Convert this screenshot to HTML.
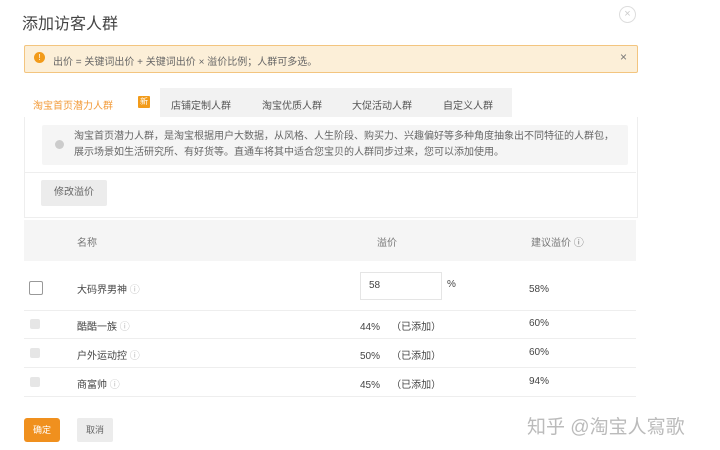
<!DOCTYPE html>
<html><head><meta charset="utf-8"><style>
body{margin:0;width:720px;height:450px;background:#fff;position:relative;overflow:hidden;font-family:"Liberation Sans","Noto Sans CJK SC",sans-serif;color:#555;font-size:10px}
.a{position:absolute;white-space:nowrap}
</style></head><body>
<div class="a" style="left:22px;top:10px;font-size:16px;color:#444">添加访客人群</div>
<div class="a" style="left:619px;top:6px;width:15px;height:15px;border:1.5px solid #ddd;border-radius:50%;color:#ccc;font-size:11px;text-align:center;line-height:15px">×</div>
<div class="a" style="left:24px;top:45px;width:612px;height:26px;background:#fcefd8;border:1px solid #f3c57f;border-radius:2px"></div>
<div class="a" style="left:34px;top:52px;width:11px;height:11px;border-radius:50%;background:#f29b1a;color:#fff;font-size:8px;text-align:center;line-height:11px">!</div>
<div class="a" style="left:53px;top:53px;color:#666">出价 = 关键词出价 + 关键词出价 × 溢价比例；人群可多选。</div>
<div class="a" style="left:620px;top:50px;font-size:12px;color:#777">×</div>
<div class="a" style="left:24px;top:88px;width:488px;height:29px;background:#f2f2f2"></div>
<div class="a" style="left:24px;top:88px;width:136px;height:30px;background:#fff"></div>
<div class="a" style="left:33px;top:97px;color:#f29b3a;font-size:10px">淘宝首页潜力人群</div>
<div class="a" style="left:138px;top:96px;width:12px;height:12px;background:#f29b1a;color:#fff;font-size:8px;text-align:center;line-height:12px;border-radius:1px">新</div>
<div class="a" style="left:171px;top:97px;font-size:10px">店铺定制人群</div>
<div class="a" style="left:262px;top:97px;font-size:10px">淘宝优质人群</div>
<div class="a" style="left:352px;top:97px;font-size:10px">大促活动人群</div>
<div class="a" style="left:443px;top:97px;font-size:10px">自定义人群</div>
<div class="a" style="left:24px;top:117px;width:612px;height:100px;border:1px solid #eee;border-top:none"></div>
<div class="a" style="left:42px;top:125px;width:586px;height:40px;background:#f5f5f5;border-radius:2px"></div>
<div class="a" style="left:55px;top:140px;width:9px;height:9px;border-radius:50%;background:#ccc"></div>
<div class="a" style="left:74px;top:129px;line-height:16px;color:#666">淘宝首页潜力人群，是淘宝根据用户大数据，从风格、人生阶段、购买力、兴趣偏好等多种角度抽象出不同特征的人群包，<br>展示场景如生活研究所、有好货等。直通车将其中适合您宝贝的人群同步过来，您可以添加使用。</div>
<div class="a" style="left:25px;top:172px;width:611px;border-top:1px solid #eee"></div>
<div class="a" style="left:41px;top:180px;width:66px;height:26px;background:#ececec;border-radius:2px;text-align:center;line-height:26px;color:#666">修改溢价</div>
<div class="a" style="left:24px;top:220px;width:612px;height:41px;background:#f5f5f5"></div>
<div class="a" style="left:77px;top:234px;color:#777">名称</div>
<div class="a" style="left:377px;top:234px;color:#777">溢价</div>
<div class="a" style="left:531px;top:234px;color:#777">建议溢价 ⓘ</div>
<div class="a" style="left:29px;top:281px;width:12px;height:12px;border:1px solid #999;border-radius:2px"></div>
<div class="a" style="left:77px;top:281px;color:#444">大码界男神 <span style="color:#bbb">ⓘ</span></div>
<div class="a" style="left:360px;top:272px;width:80px;height:26px;border:1px solid #e5e5e5"></div>
<div class="a" style="left:369px;top:280px;color:#444">58</div>
<div class="a" style="left:447px;top:279px;color:#444">%</div>
<div class="a" style="left:529px;top:284px;color:#444">58%</div>
<div class="a" style="left:24px;top:310px;width:612px;border-top:1px solid #eee"></div>
<div class="a" style="left:24px;top:338px;width:612px;border-top:1px solid #eee"></div>
<div class="a" style="left:24px;top:367px;width:612px;border-top:1px solid #eee"></div>
<div class="a" style="left:24px;top:396px;width:612px;border-top:1px solid #eee"></div>
<div class="a" style="left:30px;top:319px;width:10px;height:10px;background:#e6e6e6;border-radius:2px"></div>
<div class="a" style="left:30px;top:348px;width:10px;height:10px;background:#e6e6e6;border-radius:2px"></div>
<div class="a" style="left:30px;top:377px;width:10px;height:10px;background:#e6e6e6;border-radius:2px"></div>
<div class="a" style="left:77px;top:318px;color:#444">酷酷一族 <span style="color:#bbb">ⓘ</span></div>
<div class="a" style="left:77px;top:347px;color:#444">户外运动控 <span style="color:#bbb">ⓘ</span></div>
<div class="a" style="left:77px;top:376px;color:#444">商富帅 <span style="color:#bbb">ⓘ</span></div>
<div class="a" style="left:360px;top:318px;color:#444">44% &nbsp;&nbsp;&nbsp;（已添加）</div>
<div class="a" style="left:360px;top:347px;color:#444">50% &nbsp;&nbsp;&nbsp;（已添加）</div>
<div class="a" style="left:360px;top:376px;color:#444">45% &nbsp;&nbsp;&nbsp;（已添加）</div>
<div class="a" style="left:529px;top:318px;color:#444">60%</div>
<div class="a" style="left:529px;top:347px;color:#444">60%</div>
<div class="a" style="left:529px;top:376px;color:#444">94%</div>
<div class="a" style="left:24px;top:418px;width:36px;height:24px;background:#f0901e;border-radius:3px;color:#fff;font-size:9px;text-align:center;line-height:24px">确定</div>
<div class="a" style="left:77px;top:418px;width:36px;height:24px;background:#ececec;border-radius:2px;color:#666;font-size:9px;text-align:center;line-height:24px">取消</div>
<div class="a" style="left:527px;top:412px;font-size:19px;color:#bbb">知乎 @淘宝人寫歌</div>
</body></html>
